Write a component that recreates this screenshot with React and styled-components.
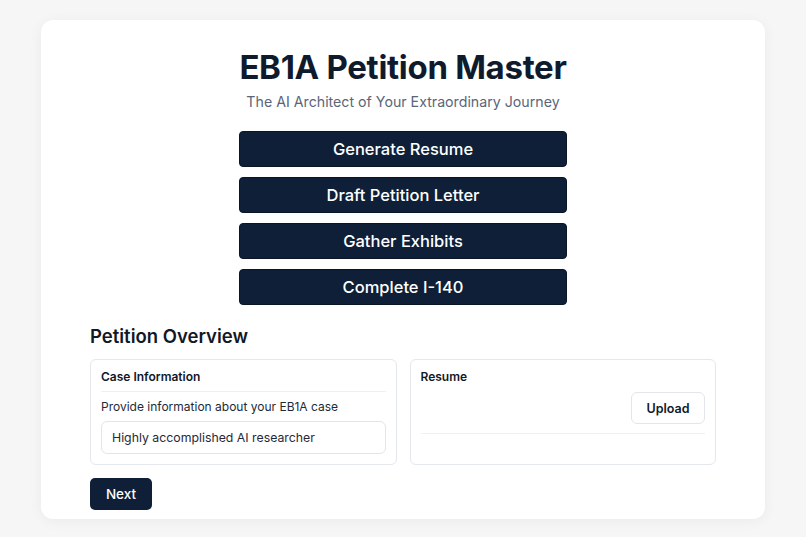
import React from "react";
import styled, { createGlobalStyle } from "styled-components";

const GlobalStyle = createGlobalStyle`
  * { box-sizing: border-box; }
  body {
    margin: 0;
    background: #f6f6f6;
    font-family: Inter, "Noto Sans", sans-serif;
    color: #0f172a;
  }
`;

const Page = styled.div`
  padding: 20px 41px 18px 41px;
`;

const Card = styled.main`
  background: #ffffff;
  border-radius: 12px;
  box-shadow: 0 2px 14px rgba(0, 0, 0, 0.05);
  padding: 27px 49px 9px 49px;
  min-height: 499px;
`;

const Header = styled.header`
  display: flex;
  flex-direction: column;
  align-items: center;
`;

const Title = styled.h1`
  margin: 0;
  font-size: 33px;
  font-weight: 700;
  letter-spacing: -0.3px;
  color: #0f1b2d;
  line-height: 40px;
`;

const Subtitle = styled.p`
  margin: 5px 0 0 0;
  font-size: 14.2px;
  color: #5b6579;
  line-height: 20px;
`;

const Actions = styled.nav`
  display: flex;
  flex-direction: column;
  gap: 10px;
  width: 328px;
  margin: 19px auto 0 auto;
`;

const ActionButton = styled.button`
  height: 36px;
  border: 1px solid #0a1628;
  border-radius: 4px;
  background: #0f1f38;
  color: #ffffff;
  font-family: inherit;
  font-size: 16.5px;
  font-weight: 500;
`;

const SectionTitle = styled.h2`
  margin: 19px 0 0 0;
  font-size: 18.5px;
  font-weight: 600;
  color: #111827;
  line-height: 24px;
`;

const Panels = styled.div`
  display: grid;
  grid-template-columns: 1fr 1fr;
  gap: 13px;
  margin-top: 11px;
`;

const Panel = styled.section`
  border: 1px solid #e4e7eb;
  border-radius: 6px;
  padding: 9px 10px 10px 10px;
  height: 106px;
  display: flex;
  flex-direction: column;
`;

const PanelTitle = styled.h3`
  margin: 0;
  font-size: 12px;
  font-weight: 600;
  color: #111827;
  line-height: 16px;
  padding-bottom: ${(p) => (p.$ruled ? "6px" : "0")};
  border-bottom: ${(p) => (p.$ruled ? "1px solid #eef0f2" : "none")};
`;

const Hint = styled.p`
  margin: 7px 0 6px 0;
  font-size: 12px;
  color: #1f2937;
  line-height: 16px;
`;

const TextInput = styled.input`
  height: 34px;
  border: 1px solid #e2e5e9;
  border-radius: 6px;
  padding: 0 10px;
  font-family: inherit;
  font-size: 12.3px;
  color: #1f2937;
`;

const UploadRow = styled.div`
  display: flex;
  justify-content: flex-end;
  margin-top: 7px;
  padding-bottom: 9px;
  border-bottom: 1px solid #eef0f2;
`;

const UploadButton = styled.button`
  width: 74px;
  height: 32px;
  border: 1px solid #e2e5e9;
  border-radius: 6px;
  background: #ffffff;
  font-family: inherit;
  font-size: 12.5px;
  font-weight: 600;
  color: #111827;
`;

const NextButton = styled.button`
  margin-top: 13px;
  width: 62px;
  height: 32px;
  border: none;
  border-radius: 5px;
  background: #0f1f38;
  color: #ffffff;
  font-family: inherit;
  font-size: 13.5px;
  font-weight: 500;
`;

const steps = [
  "Generate Resume",
  "Draft Petition Letter",
  "Gather Exhibits",
  "Complete I-140",
];

export default function App() {
  return (
    <Page>
      <GlobalStyle />
      <Card>
        <Header>
          <Title>EB1A Petition Master</Title>
          <Subtitle>The AI Architect of Your Extraordinary Journey</Subtitle>
        </Header>
        <Actions>
          {steps.map((s) => (
            <ActionButton key={s}>{s}</ActionButton>
          ))}
        </Actions>
        <SectionTitle>Petition Overview</SectionTitle>
        <Panels>
          <Panel>
            <PanelTitle $ruled>Case Information</PanelTitle>
            <Hint>Provide information about your EB1A case</Hint>
            <TextInput defaultValue="Highly accomplished AI researcher" />
          </Panel>
          <Panel>
            <PanelTitle>Resume</PanelTitle>
            <UploadRow>
              <UploadButton>Upload</UploadButton>
            </UploadRow>
          </Panel>
        </Panels>
        <NextButton>Next</NextButton>
      </Card>
    </Page>
  );
}
